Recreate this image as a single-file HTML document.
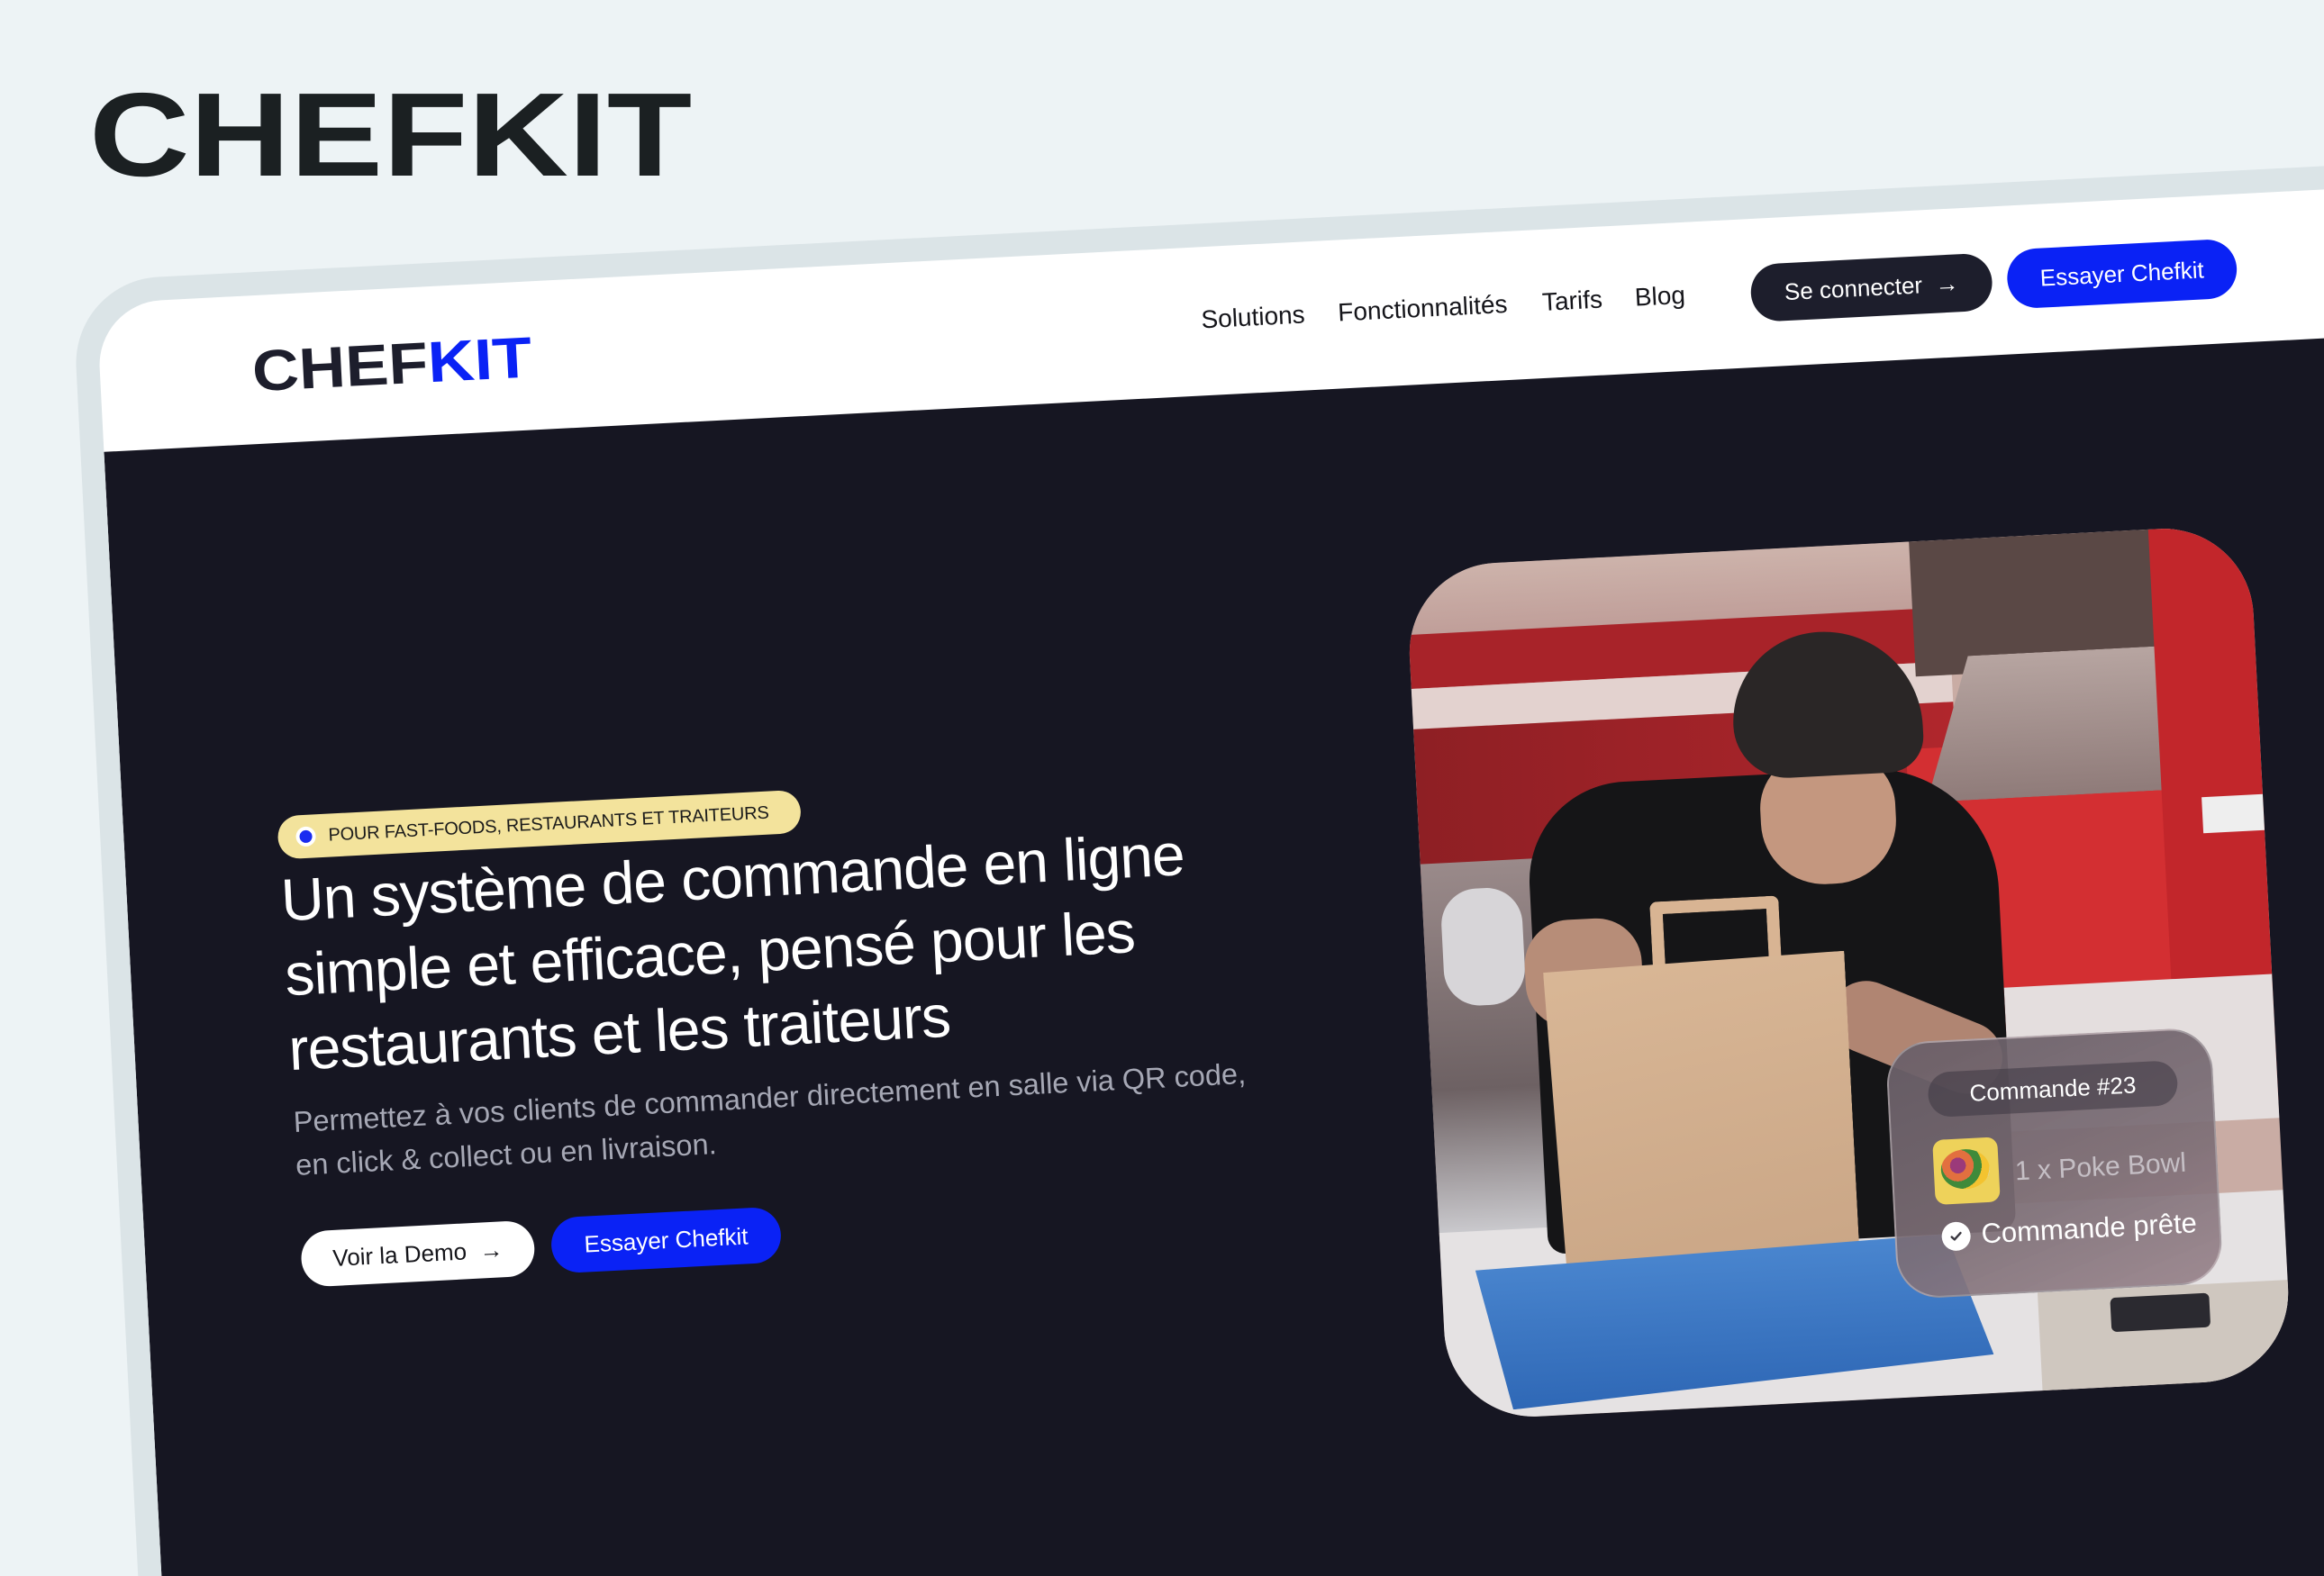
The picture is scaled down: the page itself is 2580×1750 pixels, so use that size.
<!DOCTYPE html>
<html><head><meta charset="utf-8">
<style>
*{margin:0;padding:0;box-sizing:border-box}
html,body{width:2580px;height:1750px;overflow:hidden;background:#edf3f5;font-family:"Liberation Sans",sans-serif}
#wrap{position:relative;width:2580px;height:1750px;overflow:hidden;background:#edf3f5}
.abs{position:absolute}
.biglogo{position:absolute;left:99px;top:84px;font-size:132px;line-height:1;font-weight:700;letter-spacing:0;color:#1b2022;transform:scaleX(1.17);transform-origin:0 0}
.frame{position:absolute;left:107px;top:337px;width:2700px;height:1700px;transform:rotate(-2.93deg);transform-origin:0 0}
.border{position:absolute;left:-26px;top:-26px;width:2760px;height:2200px;background:#dbe4e7;border-radius:96px 0 0 0}
.inner{position:absolute;left:0;top:0;width:2700px;height:2200px;background:#fff;border-radius:72px 0 0 0;overflow:hidden}
.hero{position:absolute;left:0;top:165px;width:2700px;height:2100px;background:#161622}
.logo{position:absolute;left:169px;top:52px;font-size:64px;line-height:1;font-weight:700;letter-spacing:0;color:#1d1e2c;transform:scaleX(1.12);transform-origin:0 0}
.logo span{color:#0a22f5}
.nl{position:absolute;top:67px;font-size:28px;line-height:1;color:#15151a}
.btn{position:absolute;border-radius:40px;display:flex;align-items:center;justify-content:center;font-size:26px;line-height:1}
.card{position:absolute;left:1436px;top:367px;width:938px;height:949px;border-radius:100px;overflow:hidden;background:#c9aca4}
.card .s{position:absolute}
.ov{position:absolute;left:505px;top:555px;width:362px;height:285px;border-radius:48px;background:linear-gradient(160deg,rgba(105,95,104,.95),rgba(125,110,118,.92) 60%,rgba(150,128,136,.9));border:2px solid rgba(255,255,255,.3)}
</style></head><body>
<div id="wrap">
<div class="biglogo">CHEFKIT</div>
<div class="frame">
  <div class="border"></div>
  <div class="inner">
    <div class="logo">CHEF<span>KIT</span></div>
    <div class="nl" style="left:1224px">Solutions</div>
    <div class="nl" style="left:1376px">Fonctionnalités</div>
    <div class="nl" style="left:1603px">Tarifs</div>
    <div class="nl" style="left:1706px">Blog</div>
    <div class="btn" style="left:1835px;top:51px;width:268px;height:64px;background:#1d1e2c;color:#fff">Se connecter&nbsp;&nbsp;→</div>
    <div class="btn" style="left:2120px;top:49px;width:255px;height:66px;background:#0a22f5;color:#fff">Essayer Chefkit</div>
    <div class="hero"></div>
    <div class="abs" style="left:171px;top:579px;width:581px;height:48px;border-radius:24px;background:#f3e39c;display:flex;align-items:center">
      <div style="width:14px;height:14px;border-radius:50%;background:#1a2cf0;margin-left:24px;box-shadow:0 0 0 4px #fff"></div>
      <div style="margin-left:18px;font-size:20px;color:#1b1b1b;letter-spacing:-0.2px">POUR FAST-FOODS, RESTAURANTS ET TRAITEURS</div>
    </div>
    <div class="abs" style="left:171px;top:631px;font-size:66px;line-height:83px;letter-spacing:-1px;color:#fff;white-space:nowrap">Un système de commande en ligne<br>simple et efficace, pensé pour les<br>restaurants et les traiteurs</div>
    <div class="abs" style="left:172px;top:895px;font-size:32.5px;line-height:48px;color:#a6a8b5;white-space:nowrap">Permettez à vos clients de commander directement en salle via QR code,<br>en click &amp; collect ou en livraison.</div>
    <div class="btn" style="left:173px;top:1041px;width:259px;height:62px;background:#fff;color:#15151a">Voir la Demo&nbsp;&nbsp;→</div>
    <div class="btn" style="left:451px;top:1040px;width:255px;height:62px;background:#0a22f5;color:#fff">Essayer Chefkit</div>

    <div class="card">
      <div class="s" style="left:0;top:0;width:938px;height:80px;background:linear-gradient(180deg,#cdb3ab,#bf9d98)"></div>
      <div class="s" style="left:0;top:75px;width:600px;height:60px;background:#a82329"></div>
      <div class="s" style="left:0;top:135px;width:600px;height:45px;background:#e3d2cf"></div>
      <div class="s" style="left:0;top:180px;width:600px;height:200px;background:linear-gradient(90deg,#8e1f24,#b0262c)"></div>
      <div class="s" style="left:0;top:330px;width:160px;height:420px;background:linear-gradient(180deg,#9a8a8a,#6d6163 60%,#cfcfd3)"></div>
      <div class="s" style="left:20px;top:360px;width:90px;height:130px;border-radius:40px;background:#d7d5d8"></div>
      <div class="s" style="left:560px;top:0;width:280px;height:150px;background:#5a4845"></div>
      <div class="s" style="left:545px;top:230px;width:300px;height:320px;background:#d32f32"></div>
      <div class="s" style="left:565px;top:130px;width:270px;height:160px;background:linear-gradient(180deg,#b7a5a1,#8f7b79);clip-path:polygon(20% 0,100% 0,100% 100%,0 100%)"></div>
      <div class="s" style="left:826px;top:0;width:112px;height:640px;background:#c2262b"></div>
      <div class="s" style="left:870px;top:300px;width:68px;height:40px;background:#eee"></div>
      <div class="s" style="left:640px;top:500px;width:298px;height:160px;background:#e4dede"></div>
      <div class="s" style="left:0;top:740px;width:938px;height:209px;background:#e5e2e3"></div>
      <div class="s" style="left:660px;top:840px;width:278px;height:109px;background:#cfc7bf"></div>
      <div class="s" style="left:740px;top:850px;width:110px;height:38px;border-radius:6px;background:#2b2a30"></div>
      <div class="s" style="left:120px;top:250px;width:520px;height:520px;border-radius:110px 140px 20px 20px;background:#151517"></div>
      <div class="s" style="left:110px;top:400px;width:130px;height:120px;border-radius:50px;background:#b78d78"></div>
      <div class="s" style="left:440px;top:510px;width:200px;height:80px;border-radius:40px;background:#b08572;transform:rotate(25deg)"></div>
      <div class="s" style="left:380px;top:230px;width:150px;height:145px;border-radius:60px 60px 70px 70px;background:#c4977f"></div>
      <div class="s" style="left:355px;top:95px;width:210px;height:160px;border-radius:100px 110px 40px 60px;background:#2a2626"></div>
      <div class="s" style="left:252px;top:385px;width:143px;height:70px;border:14px solid #d8b493;border-bottom:none;border-radius:8px 8px 0 0"></div>
      <div class="s" style="left:130px;top:450px;width:335px;height:360px;background:linear-gradient(170deg,#d9b796,#c9a585);clip-path:polygon(0 2%,100% 0,100% 100%,3% 100%)"></div>
      <div class="s" style="left:38px;top:770px;width:570px;height:170px;background:linear-gradient(180deg,#4a86cf,#2f68b6);clip-path:polygon(0 8%,92% 0,100% 80%,6% 100%)"></div>
      <div class="ov">
        <div class="abs" style="left:43px;top:33px;width:277px;height:50px;border-radius:25px;background:rgba(60,55,65,.55);color:#fff;font-size:26px;display:flex;align-items:center;justify-content:center">Commande #23</div>
        <div class="abs" style="left:45px;top:108px;width:72px;height:72px;border-radius:12px;background:#eed25a;overflow:hidden">
          <div style="position:absolute;left:8px;top:12px;width:54px;height:44px;border-radius:50%;background:radial-gradient(circle at 35% 40%,#9b3a7a 0 20%,#e2703f 20% 40%,#3f8a3a 40% 60%,#f3c330 60% 80%,#cfd7cf 80%)"></div>
        </div>
        <div class="abs" style="left:135px;top:133px;font-size:30px;line-height:1;color:#c5bfc5">1 x Poke Bowl</div>
        <div class="abs" style="left:50px;top:200px;width:32px;height:32px;border-radius:50%;background:#fff;display:flex;align-items:center;justify-content:center">
          <svg width="16" height="16" viewBox="0 0 16 16"><path d="M3 8.5l3 3 7-7" fill="none" stroke="#3a3840" stroke-width="2.4" stroke-linecap="round" stroke-linejoin="round"/></svg>
        </div>
        <div class="abs" style="left:94px;top:199px;font-size:31px;line-height:1;color:#fff">Commande prête</div>
      </div>
    </div>
  </div>
</div>
</div>
</body></html>
